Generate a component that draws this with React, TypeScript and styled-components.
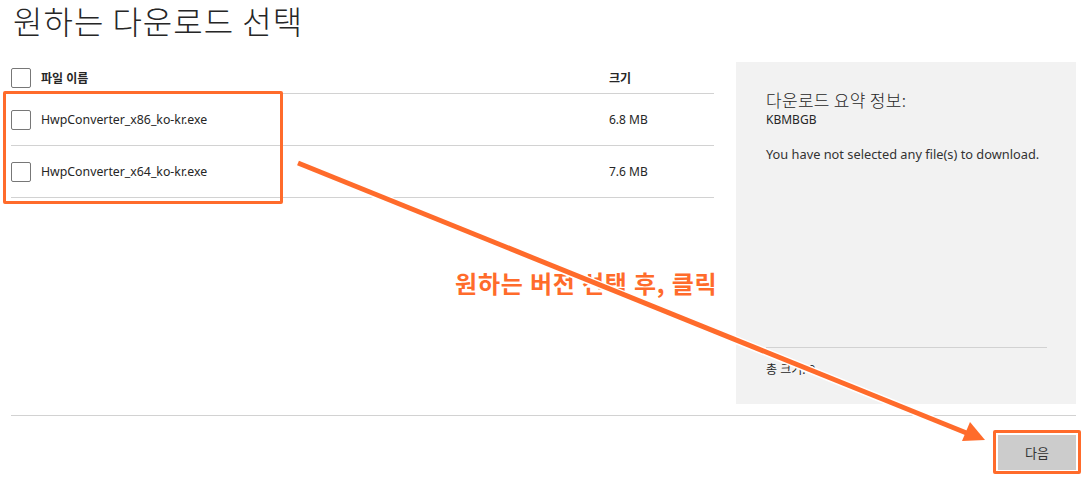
import React from "react";
import styled, { createGlobalStyle } from "styled-components";

const GlobalStyle = createGlobalStyle`
  html, body {
    margin: 0;
    padding: 0;
    background: #ffffff;
  }
  body {
    font-family: "Noto Sans", "Noto Sans CJK KR", sans-serif;
    color: #262626;
  }
`;

const files = [
  { name: "HwpConverter_x86_ko-kr.exe", size: "6.8 MB" },
  { name: "HwpConverter_x64_ko-kr.exe", size: "7.6 MB" },
];

const App = () => {
  return (
    <Page>
      <GlobalStyle />
      <Title>원하는 다운로드 선택</Title>
      <Main>
        <FileTable>
          <HeaderRow>
            <Check />
            <NameCell bold>파일 이름</NameCell>
            <SizeCell bold>크기</SizeCell>
          </HeaderRow>
          {files.map((f) => (
            <FileRow key={f.name}>
              <Check />
              <NameCell>{f.name}</NameCell>
              <SizeCell>{f.size}</SizeCell>
            </FileRow>
          ))}
        </FileTable>
        <Summary>
          <SummaryTitle>다운로드 요약 정보:</SummaryTitle>
          <SummaryText>KBMBGB</SummaryText>
          <SummaryNote>You have not selected any file(s) to download.</SummaryNote>
          <Spacer />
          <SummaryTotal>총 크기: 0</SummaryTotal>
        </Summary>
      </Main>
      <Footer>
        <NextButton>다음</NextButton>
      </Footer>

      {/* annotations drawn over the page */}
      <Highlight style={{ left: 3, top: 91, width: 274, height: 107 }} />
      <Highlight style={{ left: 993, top: 430, width: 82, height: 38 }} />
      <Callout>원하는 버전 선택 후, 클릭</Callout>
      <Arrow width="1088" height="478" viewBox="0 0 1088 478">
        <g strokeLinecap="butt">
          <line x1="297" y1="163" x2="969" y2="434" stroke="#ffffff" strokeWidth="8" />
          <polygon points="985,440 962,441 970,422" fill="#ffffff" stroke="#ffffff" strokeWidth="3" />
          <line x1="298" y1="163" x2="969" y2="434" stroke="#ff6b2b" strokeWidth="5" />
          <polygon points="985,440 962,441 970,422" fill="#ff6b2b" />
        </g>
      </Arrow>
    </Page>
  );
};

export default App;

const Page = styled.div`
  position: relative;
  width: 1088px;
  height: 478px;
  box-sizing: border-box;
  padding: 0 12px 0 11px;
  overflow: hidden;
`;

const Title = styled.h1`
  margin: 0;
  height: 62px;
  padding-left: 2px;
  font-family: "Noto Sans CJK KR", sans-serif;
  font-weight: 300;
  font-size: 32px;
  line-height: 40px;
  letter-spacing: 1px;
  color: #262626;
`;

const Main = styled.div`
  display: flex;
  gap: 22px;
  height: 342px;
`;

const FileTable = styled.div`
  width: 703px;
  display: flex;
  flex-direction: column;
`;

const Row = styled.div`
  display: flex;
  align-items: center;
  border-bottom: 1px solid #d2d2d2;
  box-sizing: border-box;
`;

const HeaderRow = styled(Row)`
  height: 32px;
`;

const FileRow = styled(Row)`
  height: 52px;
`;

const Check = styled.span`
  width: 20px;
  height: 20px;
  box-sizing: border-box;
  border: 1px solid #777777;
  border-radius: 2px;
  background: #ffffff;
  flex-shrink: 0;
`;

const NameCell = styled.span<{ bold?: boolean }>`
  flex: 1;
  padding-left: 10px;
  font-size: ${(p) => (p.bold ? "12px" : "12.3px")};
  font-weight: ${(p) => (p.bold ? 700 : 400)};
  color: #262626;
`;

const SizeCell = styled.span<{ bold?: boolean }>`
  width: 105px;
  font-size: 12px;
  font-weight: ${(p) => (p.bold ? 700 : 400)};
  color: #262626;
`;

const Summary = styled.div`
  width: 340px;
  background: #f2f2f2;
  box-sizing: border-box;
  padding: 26px 29px 26px 30px;
  display: flex;
  flex-direction: column;
`;

const SummaryTitle = styled.div`
  font-family: "Noto Sans CJK KR", sans-serif;
  font-weight: 300;
  font-size: 17px;
  line-height: 24px;
  letter-spacing: 0.3px;
  color: #262626;
`;

const SummaryText = styled.div`
  font-size: 12px;
  line-height: 16px;
`;

const SummaryNote = styled.div`
  margin-top: 18px;
  font-size: 12.8px;
  line-height: 16px;
  color: #333333;
`;

const Spacer = styled.div`
  flex: 1;
  border-bottom: 1px solid #d2d2d2;
`;

const SummaryTotal = styled.div`
  margin-top: 14px;
  font-size: 12px;
  line-height: 16px;
`;

const Footer = styled.div`
  margin-top: 11px;
  border-top: 1px solid #d2d2d2;
  display: flex;
  justify-content: flex-end;
  padding-top: 19px;
`;

const NextButton = styled.button`
  width: 78px;
  height: 35px;
  border: none;
  background: #cccccc;
  font-family: "Noto Sans CJK KR", sans-serif;
  font-size: 13px;
  color: #333333;
`;

const Highlight = styled.div`
  position: absolute;
  border: 3px solid #ff6b2b;
  border-radius: 2px;
`;

const Callout = styled.div`
  position: absolute;
  left: 455px;
  top: 267px;
  font-family: "Noto Sans CJK KR", sans-serif;
  font-weight: 700;
  font-size: 24px;
  line-height: 32px;
  letter-spacing: 0.8px;
  color: #ff6b2b;
  text-shadow: 0 0 2px #ffffff;
  white-space: nowrap;
`;

const Arrow = styled.svg`
  position: absolute;
  left: 0;
  top: 0;
  pointer-events: none;
`;
